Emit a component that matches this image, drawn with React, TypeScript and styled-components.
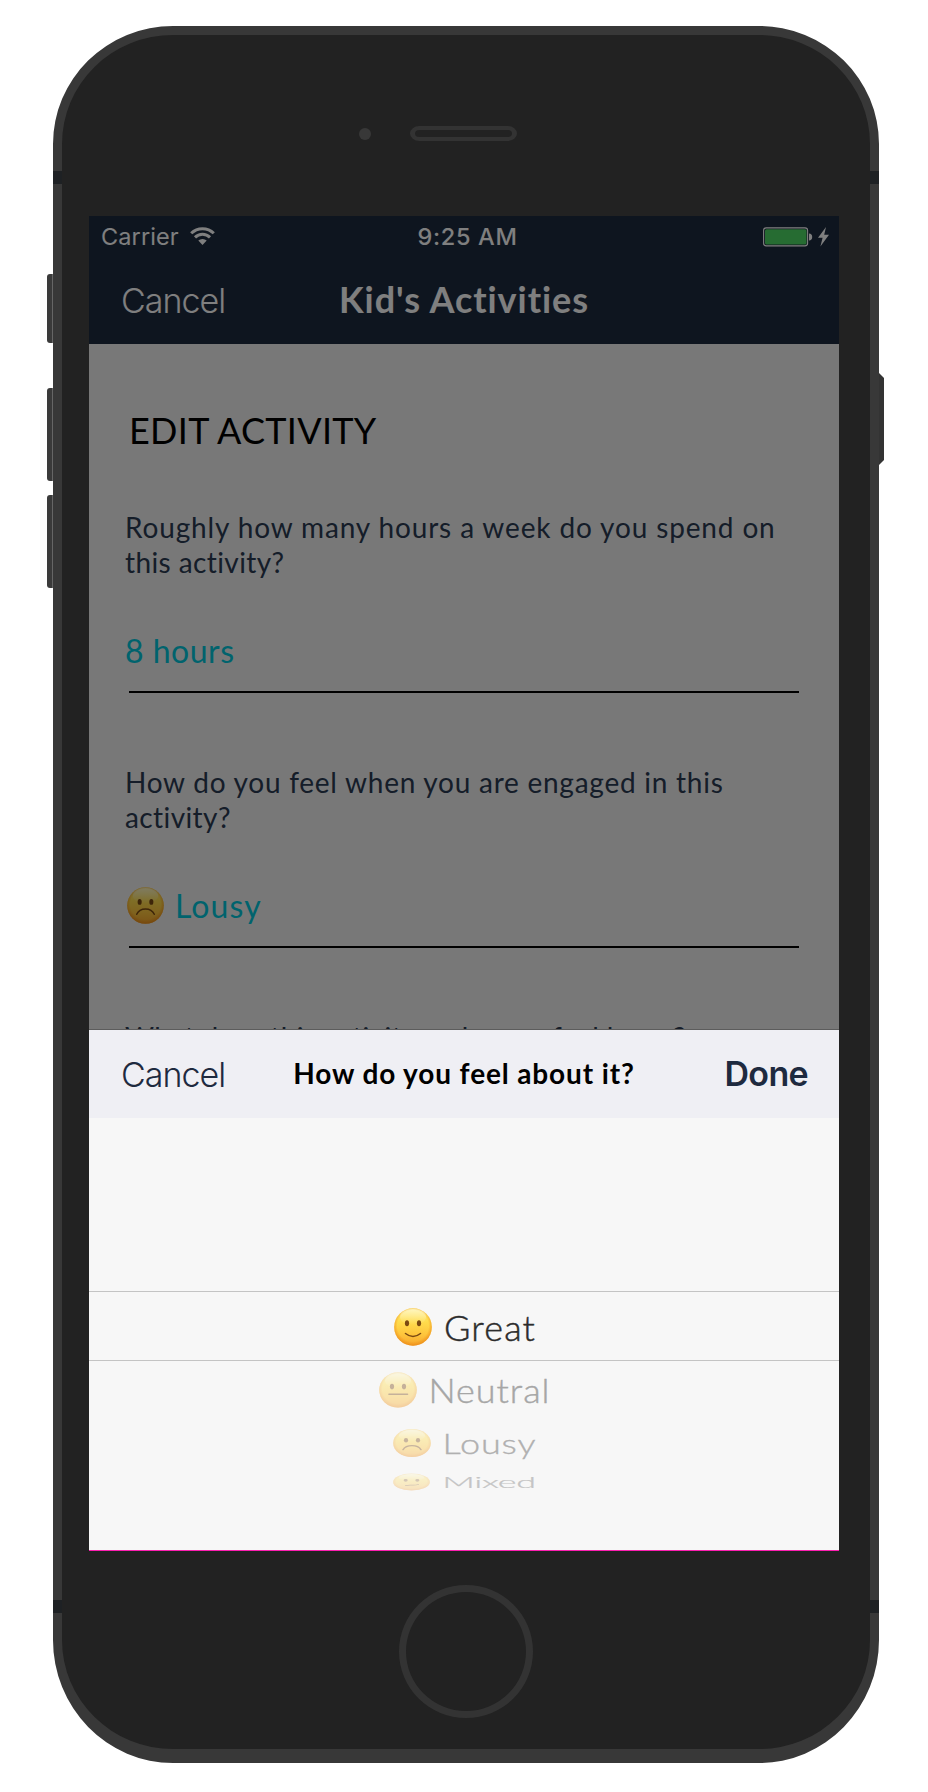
import React from 'react';
import styled, { createGlobalStyle } from 'styled-components';

const brandFont = 'Lato, "Liberation Sans", sans-serif';
const systemFont = 'Inter, "Liberation Sans", sans-serif';
const navy = '#1e2a3f';

const GlobalStyle = createGlobalStyle`
  * { box-sizing: border-box; }
  body { margin: 0; background: #fff; }
`;

const Page = styled.main`
  width: 928px;
  height: 1792px;
  padding: 26px 0 0 53px;
  overflow: hidden;
  background: #fff;
`;

/* ---------- device ---------- */

const Phone = styled.div`
  position: relative;
  display: flex;
  flex-direction: column;
  width: 826px;
  height: 1737px;
  background: #222;
  border: 9px solid #383838;
  border-bottom-width: 14px;
  border-radius: 120px 120px 120px 120px / 118px 118px 123px 123px;
`;

const Band = styled.span<{ $side: 'left' | 'right'; $top: number }>`
  position: absolute;
  ${(p) => p.$side}: -9px;
  top: ${(p) => p.$top}px;
  width: 9px;
  height: 13px;
  background: #1e2124;
`;

const SideButton = styled.span<{ $top: number; $height: number }>`
  position: absolute;
  left: -15px;
  top: ${(p) => p.$top}px;
  width: 6px;
  height: ${(p) => p.$height}px;
  background: #3a3a3a;
  border-right: 1px solid #666;
  border-radius: 3px 0 0 3px;
`;

const PowerButton = styled.span`
  position: absolute;
  right: -14px;
  top: 338px;
  width: 5px;
  height: 92px;
  background: #333;
  clip-path: polygon(0 0, 100% 5px, 100% 87px, 0 100%);
`;

const TopBezel = styled.div`
  display: flex;
  align-items: center;
  gap: 39px;
  height: 181px;
  padding: 16px 0 0 297px;
`;

const Camera = styled.span`
  width: 12px;
  height: 12px;
  border-radius: 50%;
  background: #383838;
`;

const Speaker = styled.span`
  width: 107px;
  height: 15px;
  border: solid #333;
  border-width: 4px 5px;
  border-radius: 10px / 8px;
`;

const Screen = styled.div`
  display: flex;
  flex-direction: column;
  width: 750px;
  height: 1335px;
  margin-left: 27px;
  overflow: hidden;
  background: #f7f7f7;
  border-bottom: 1px solid #fb1fb0;
`;

const HomeButton = styled.span`
  width: 134px;
  height: 133px;
  margin: 34px 0 0 337px;
  border: 7px solid #333;
  border-radius: 50%;
`;

/* ---------- screen behind the sheet ---------- */

const AppView = styled.section`
  position: relative;
  height: 814px;
  overflow: hidden;
  background: #f1f1f1;
  border-bottom: 1px solid #5c5c5c;
`;

const Dimmer = styled.div`
  position: absolute;
  inset: 0;
  background: rgba(0, 0, 0, 0.5);
`;

const Header = styled.header`
  height: 128px;
  background: #1c2a3e;
  color: #fff;
`;

const StatusBar = styled.div`
  display: grid;
  grid-template-columns: 1fr auto 1fr;
  align-items: center;
  height: 40px;
  padding: 1px 9px 0 12px;
  font: 400 23.5px/38px ${systemFont};
`;

const Carrier = styled.div`
  display: flex;
  align-items: center;
  gap: 11px;
  font-weight: 400;
  letter-spacing: 0.1px;
`;

const Clock = styled.div`
  padding-left: 4px;
  font-weight: 500;
  letter-spacing: 0.7px;
`;

const Power = styled.div`
  display: flex;
  align-items: center;
  justify-content: flex-end;
`;

const Bar = styled.div`
  display: grid;
  grid-template-columns: 1fr auto 1fr;
  align-items: center;
  height: 88px;
  padding: 0 31px;
`;

const SheetBar = styled(Bar)`
  background: #efeff4;
  color: ${navy};
`;

const BarButton = styled.button<{ $strong?: boolean }>`
  justify-self: ${(p) => (p.$strong ? 'end' : 'start')};
  padding: ${(p) => (p.$strong ? '0' : '1px 0 0 1px')};
  border: 0;
  background: none;
  color: inherit;
  font: ${(p) => (p.$strong ? 600 : 350)} 34px/44px ${systemFont};
  letter-spacing: ${(p) => (p.$strong ? -0.65 : -1)}px;
`;

const Title = styled.h1`
  margin: 0;
  padding-bottom: 3px;
  font: 700 36px/44px ${brandFont};
  letter-spacing: 0.95px;
`;

const SheetTitle = styled.h2`
  margin: 0;
  padding-bottom: 2px;
  color: #000;
  font: 700 28px/36px ${brandFont};
  letter-spacing: 0.87px;
`;

const Form = styled.div`
  padding: 64px 37px 0 36px;
  font-family: ${brandFont};
`;

const Heading = styled.h2`
  margin: 0 0 58px 4px;
  color: #000;
  font-size: 36px;
  font-weight: 400;
  line-height: 44px;
  letter-spacing: 0.3px;
`;

const Field = styled.div`
  margin-bottom: 72px;
`;

const Question = styled.p`
  margin: 0;
  color: #2a3a52;
  font-size: 28px;
  line-height: 35px;
`;

const Line = styled.span<{ $spacing: number }>`
  display: block;
  white-space: nowrap;
  letter-spacing: ${(p) => p.$spacing}px;
`;

const Answer = styled.div<{ $spacing: number; $inset?: number }>`
  display: flex;
  align-items: center;
  gap: 11px;
  height: 61px;
  margin-top: 50px;
  padding: 0 0 20px ${(p) => p.$inset ?? 0}px;
  color: #00c6da;
  font-size: 32px;
  line-height: 40px;
  letter-spacing: ${(p) => p.$spacing}px;
`;

const Rule = styled.hr`
  height: 2px;
  margin: 0 3px 0 4px;
  border: 0;
  background: #000;
`;

/* ---------- picker ---------- */

const Picker = styled.div`
  display: flex;
  flex-direction: column;
  padding-top: 173px;
  font-family: ${brandFont};
`;

const Option = styled.div<{ $height: number; $selected?: boolean }>`
  display: flex;
  align-items: center;
  justify-content: center;
  height: ${(p) => p.$height}px;
  padding: ${(p) => (p.$selected ? '1px 0 0 2px' : '0 0 0 1px')};
  ${(p) => p.$selected && 'border: solid #c4c4c4; border-width: 1px 0;'}
`;

const OptionBody = styled.div<{ $scale: number; $fade: number; $spacing: number; $color: string; $face: number }>`
  display: flex;
  align-items: center;
  gap: 12px;
  transform: scaleY(${(p) => p.$scale});
  color: ${(p) => p.$color};
  font-size: 36px;
  font-weight: 300;
  line-height: 44px;
  letter-spacing: ${(p) => p.$spacing}px;
  -webkit-text-stroke: 0.45px ${(p) => p.$color};

  svg {
    opacity: ${(p) => p.$fade};
    width: ${(p) => p.$face}px;
  }
`;

type Mood = 'great' | 'neutral' | 'lousy' | 'mixed';

const mouths: Record<Mood, string> = {
  great: 'M11.5 25.5Q19 31.5 26.5 25.5',
  neutral: 'M10 23.5H28.5',
  lousy: 'M10 28Q12.5 22.5 19 22.5Q25.5 22.5 28 28',
  mixed: 'M13 27Q16 25.5 19 26Q23 26.5 26 24.5',
};

function Face({ mood, size = 38 }: { mood: Mood; size?: number }) {
  const id = `face-${mood}-${size}`;
  return (
    <svg width={size} height={size} viewBox="0 0 38 38" aria-hidden="true">
      <defs>
        <linearGradient id={id} x1="0" y1="0" x2="0" y2="1">
          <stop offset="0" stopColor="#ffee82" />
          <stop offset="0.35" stopColor="#ffdd4e" />
          <stop offset="0.7" stopColor="#fec53c" />
          <stop offset="1" stopColor="#f6a52c" />
        </linearGradient>
        <radialGradient id={`${id}-rim`} cx="0.5" cy="0.47" r="0.53">
          <stop offset="0.78" stopColor="#ee8a14" stopOpacity="0" />
          <stop offset="1" stopColor="#e98512" stopOpacity="0.7" />
        </radialGradient>
        <linearGradient id={`${id}-shine`} x1="0" y1="0" x2="0" y2="1">
          <stop offset="0" stopColor="#fff" stopOpacity="0.5" />
          <stop offset="1" stopColor="#fff" stopOpacity="0" />
        </linearGradient>
      </defs>
      <circle cx="19" cy="19" r="18.8" fill={`url(#${id})`} />
      <circle cx="19" cy="19" r="18.8" fill={`url(#${id}-rim)`} />
      <ellipse cx="19" cy="9" rx="13" ry="8" fill={`url(#${id}-shine)`} />
      <ellipse cx="13" cy="15.3" rx="2.1" ry="3" fill="#7b4a12" />
      <ellipse cx="25" cy="15.3" rx="2.1" ry="3" fill="#7b4a12" />
      <path d={mouths[mood]} fill="none" stroke="#7b4a12" strokeWidth="1.6" strokeLinecap="round" />
    </svg>
  );
}

function WifiIcon() {
  return (
    <svg width="25" height="19" viewBox="0 0 25 19" fill="none" stroke="currentColor" strokeWidth="3" aria-hidden="true">
      <path d="M1.2 6.3A16 16 0 0 1 23.8 6.3" />
      <path d="M5 10.4A10.7 10.7 0 0 1 20 10.4" />
      <path d="M8.3 13.6A6 6 0 0 1 16.7 13.6L12.5 18Z" fill="currentColor" stroke="none" />
    </svg>
  );
}

function BatteryIcon() {
  return (
    <svg width="67" height="20" viewBox="0 0 67 20" aria-hidden="true">
      <rect x="0.6" y="0.9" width="44" height="18" rx="2.6" fill="none" stroke="#fff" strokeWidth="1.1" />
      <rect x="2" y="2.3" width="41.500" height="15.2" rx="1.5" fill="#4cd964" />
      <path d="M46 6.4Q49.2 6.6 49.2 9.9Q49.2 13.2 46 13.4Z" fill="#fff" />
      <path d="M63 0L55 10.8H59.6L57.4 19.5L66 7.8H61.2Z" fill="#fff" />
    </svg>
  );
}

const options: { mood: Mood; label: string; height: number; scale: number; fade: number; spacing: number; color: string; face: number }[] = [
  { mood: 'great', label: 'Great', height: 70, scale: 1, fade: 1, spacing: 1.2, color: '#2c2c2c', face: 38 },
  { mood: 'neutral', label: 'Neutral', height: 58, scale: 0.94, fade: 0.4, spacing: 0.95, color: '#a6a6a6', face: 38 },
  { mood: 'lousy', label: 'Lousy', height: 48, scale: 0.75, fade: 0.38, spacing: 0.9, color: '#b0b0b0', face: 38 },
  { mood: 'mixed', label: 'Mixed', height: 29, scale: 0.46, fade: 0.28, spacing: -0.3, color: '#c4c4c4', face: 37 },
];

export default function App() {
  return (
    <Page>
      <GlobalStyle />
      <Phone>
        <Band $side="left" $top={136} />
        <Band $side="right" $top={136} />
        <Band $side="left" $top={1565} />
        <Band $side="right" $top={1565} />
        <SideButton $top={239} $height={69} />
        <SideButton $top={353} $height={93} />
        <SideButton $top={460} $height={93} />
        <PowerButton />
        <TopBezel>
          <Camera />
          <Speaker />
        </TopBezel>
        <Screen>
          <AppView>
            <Header>
              <StatusBar>
                <Carrier>
                  Carrier <WifiIcon />
                </Carrier>
                <Clock>9:25 AM</Clock>
                <Power>
                  <BatteryIcon />
                </Power>
              </StatusBar>
              <Bar>
                <BarButton>Cancel</BarButton>
                <Title>Kid's Activities</Title>
              </Bar>
            </Header>
            <Form>
              <Heading>EDIT ACTIVITY</Heading>
              <Field>
                <Question>
                  <Line $spacing={0.86}>Roughly how many hours a week do you spend on</Line>
                  <Line $spacing={0.4}>this activity?</Line>
                </Question>
                <Answer $spacing={0.5}>8 hours</Answer>
                <Rule />
              </Field>
              <Field>
                <Question>
                  <Line $spacing={0.75}>How do you feel when you are engaged in this</Line>
                  <Line $spacing={0.4}>activity?</Line>
                </Question>
                <Answer $spacing={1.1} $inset={2}>
                  <Face mood="lousy" size={37} /> Lousy
                </Answer>
                <Rule />
              </Field>
              <Question>
                <Line $spacing={0.42}>What does this activity make you feel lousy?</Line>
              </Question>
            </Form>
            <Dimmer />
          </AppView>
          <SheetBar>
            <BarButton>Cancel</BarButton>
            <SheetTitle>How do you feel about it?</SheetTitle>
            <BarButton $strong>Done</BarButton>
          </SheetBar>
          <Picker>
            {options.map((o) => (
              <Option key={o.mood} $height={o.height} $selected={o.mood === 'great'}>
                <OptionBody $scale={o.scale} $fade={o.fade} $spacing={o.spacing} $color={o.color} $face={o.face}>
                  <Face mood={o.mood} />
                  <span>{o.label}</span>
                </OptionBody>
              </Option>
            ))}
          </Picker>
        </Screen>
        <HomeButton />
      </Phone>
    </Page>
  );
}
